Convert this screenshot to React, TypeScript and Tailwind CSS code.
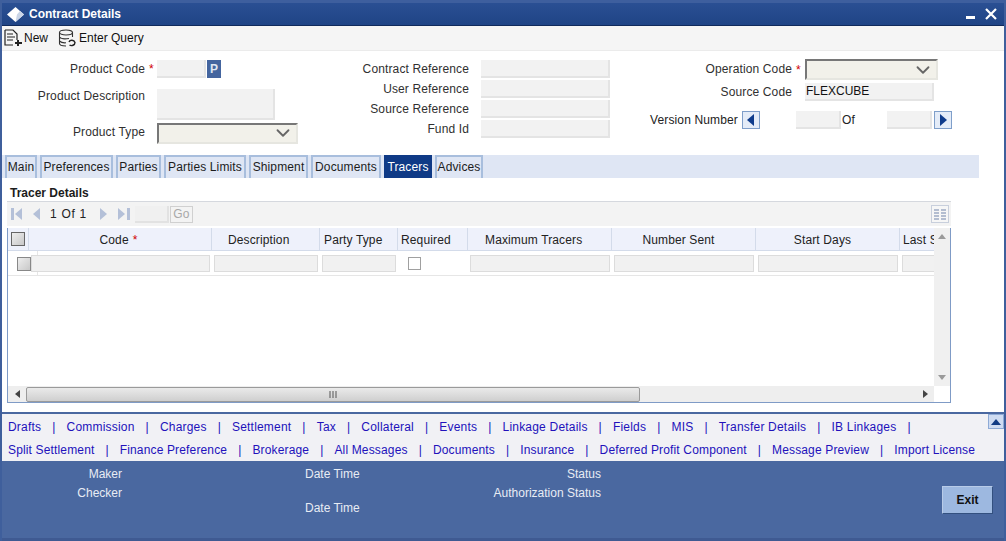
import { ChevronDown } from "lucide-react";
import type { ReactNode } from "react";

const inputCls = "bg-[#f2f2f2] border-b-2 border-r-2 border-[#e4e4e4]";

function Star() {
  return <span className="text-[#d00000]">*</span>;
}

function Input({ className, children }: { className: string; children?: ReactNode }) {
  return <div className={`${inputCls} ${className}`}>{children}</div>;
}

function Select({ className }: { className: string }) {
  return (
    <div className={`flex items-center justify-end pr-[2px] bg-[#f2f1ea] border-t-2 border-l-2 border-t-[#777777] border-l-[#777777] border-b-2 border-r-2 border-b-[#e6e6e0] border-r-[#e6e6e0] ${className}`}>
      <ChevronDown size={22} strokeWidth={2} className="text-[#666666]" />
    </div>
  );
}

function FormRow({ label, labelWidth, star, children, className }: { label: string; labelWidth: string; star?: boolean; children: ReactNode; className: string }) {
  return (
    <div className={`flex items-center ${className}`}>
      <span className={`text-right text-[#303030] ${labelWidth}`}>{label}</span>
      <span className="w-[12px] pl-[4px] leading-none">{star ? <Star /> : null}</span>
      {children}
    </div>
  );
}

function Arrow({ left }: { left?: boolean }) {
  return (
    <div className="flex h-[18px] w-[18px] items-center justify-center bg-[#e4ecf8] border border-[#7f9fca]">
      <svg width="8" height="12" viewBox="0 0 8 12">
        <path d={left ? "M7 0V12L0 6Z" : "M1 0V12L8 6Z"} fill="#0f3c8c" />
      </svg>
    </div>
  );
}

function Tab({ label, width, active }: { label: string; width: string; active?: boolean }) {
  return (
    <div className={`flex h-[23px] items-center justify-center pb-[2px] border-2 border-b-0 ${width} ${active ? "bg-[#0f3a86] border-[#0f3a86] text-white" : "bg-[#dfe6f4] border-[#a8bedd] text-[#1c1c1c]"}`}>
      {label}
    </div>
  );
}

type Column = { label: string; w: string; cell: string; input?: string; star?: boolean; check?: boolean };

const columns: Column[] = [
  { label: "Code", w: "w-[183px]", cell: "justify-center pr-[3px]", input: "w-[179px] ml-[2px]", star: true },
  { label: "Description", w: "w-[108px]", cell: "pl-[16px]", input: "w-[104px] ml-[2px]" },
  { label: "Party Type", w: "w-[78px]", cell: "pl-[4px]", input: "w-[74px] ml-[2px]" },
  { label: "Required", w: "w-[70px]", cell: "pl-[3px]", check: true },
  { label: "Maximum Tracers", w: "w-[144px]", cell: "pl-[17px]", input: "w-[140px] ml-[2px]" },
  { label: "Number Sent", w: "w-[144px]", cell: "justify-center pr-[10px]", input: "w-[140px] ml-[2px]" },
  { label: "Start Days", w: "w-[144px]", cell: "justify-center pr-[10px]", input: "w-[140px] ml-[2px]" },
  { label: "Last Sent", w: "w-[100px]", cell: "pl-[3px]", input: "w-[96px] ml-[2px]" },
];

const linksA = ["Drafts", "Commission", "Charges", "Settlement", "Tax", "Collateral", "Events", "Linkage Details", "Fields", "MIS", "Transfer Details", "IB Linkages"];
const linksB = ["Split Settlement", "Finance Preference", "Brokerage", "All Messages", "Documents", "Insurance", "Deferred Profit Component", "Message Preview", "Import License"];

function Links({ items, trailing, className }: { items: string[]; trailing?: boolean; className: string }) {
  return (
    <div className={`flex items-center gap-[11px] pl-[6px] text-[#2211bb] ${className}`}>
      {items.map((item, i) => (
        <div key={item} className="flex items-center gap-[11px]">
          <span>{item}</span>
          {i < items.length - 1 || trailing ? <span>|</span> : null}
        </div>
      ))}
    </div>
  );
}

export default function App() {
  return (
    <div className="flex h-[541px] w-[1006px] flex-col overflow-hidden border-x-2 border-[#3f5f9c] bg-white text-[12px] leading-[14px] tracking-[0.13px] font-['Liberation_Sans',Arial,sans-serif]">
      {/* title bar */}
      <div className="-mx-[2px] flex h-[26px] shrink-0 items-center bg-gradient-to-b from-[#2a4f93] to-[#1f4486] border-t-[3px] border-[#3e5f9e] border-b border-b-[#102a5c] pl-[7px] pr-[9px] tracking-normal text-white">
        <svg width="17" height="15" viewBox="0 0 17 15" className="mr-[5px]">
          <path d="M8.5 0L17 7.5L8.5 15L0 7.5Z" fill="#ffffff" />
          <path d="M8.5 15L17 7.5L13 4L10 7.5Z" fill="#c9d4e6" />
        </svg>
        <span className="font-bold">Contract Details</span>
        <div className="ml-auto flex items-center gap-[9px]">
          <svg width="11" height="11" viewBox="0 0 11 11"><rect x="1" y="7" width="9" height="3" fill="#ffffff" /></svg>
          <svg width="12" height="12" viewBox="0 0 12 12"><path d="M1 1L11 11M11 1L1 11" stroke="#ffffff" strokeWidth="2.2" /></svg>
        </div>
      </div>

      {/* toolbar */}
      <div className="flex h-[25px] shrink-0 items-center bg-[#f5f5f5] border-b border-[#ebebeb] pl-[2px] tracking-normal text-[#111111]">
        <svg width="19" height="18" viewBox="0 0 19 18" fill="none" stroke="#222222" strokeWidth="1.2" className="mr-[1px]">
          <path d="M1 1H9L13 5V11M1 1V16H9M3 5H9M3 8H11M3 11H9" />
          <path d="M14 11V17M11 14H18" strokeWidth="2" />
        </svg>
        <span>New</span>
        <svg width="19" height="18" viewBox="0 0 19 18" fill="none" stroke="#333333" strokeWidth="1.1" className="ml-[10px] mr-[2px]">
          <ellipse cx="8" cy="3.5" rx="6.5" ry="2.5" />
          <path d="M1.5 3.5V14.5C1.5 16 4 17 8 17M14.5 3.5V8M1.5 8C3 10 8 10 11 9.5M1.5 12C3 13.5 6 14 8 13.8" />
          <path d="M11 13C12 10.5 16 10.5 17 13.5C17 16 13.5 17.5 11.5 16" stroke="#222222" strokeWidth="1.4" />
        </svg>
        <span>Enter Query</span>
      </div>

      {/* form */}
      <div className="flex h-[104px] shrink-0 text-[12px]">
        <div className="w-[338px] shrink-0 pt-[9px]">
          <FormRow label="Product Code" labelWidth="w-[143px]" star className="h-[18px]">
            <Input className="h-[18px] w-[49px]" />
            <div className="ml-[1px] flex h-[18px] w-[14px] items-center justify-center bg-[#44659f] font-bold text-[#dfe5f0]">P</div>
          </FormRow>
          <FormRow label="Product Description" labelWidth="w-[143px]" className="mt-[11px] h-[31px] !items-start">
            <Input className="h-[31px] w-[118px]" />
          </FormRow>
          <FormRow label="Product Type" labelWidth="w-[143px] pb-[2px]" className="mt-[2px] h-[22px]">
            <Select className="h-[21px] w-[141px]" />
          </FormRow>
        </div>
        <div className="w-[272px] shrink-0 pt-[9px]">
          {["Contract Reference", "User Reference", "Source Reference", "Fund Id"].map((label) => (
            <FormRow key={label} label={label} labelWidth="w-[129px]" className="mb-[2px] h-[18px]">
              <Input className="h-[18px] w-[129px]" />
            </FormRow>
          ))}
        </div>
        <div className="flex-1 pt-[8px]">
          <FormRow label="Operation Code" labelWidth="w-[180px] pb-[2px]" star className="h-[21px]">
            <Select className="ml-[1px] h-[21px] w-[133px]" />
          </FormRow>
          <FormRow label="Source Code" labelWidth="w-[180px]" className="mt-[3px] h-[18px]">
            <Input className="ml-[1px] flex h-[18px] w-[129px] items-center pl-[1px] tracking-normal text-[#111111]">FLEXCUBE</Input>
          </FormRow>
          <div className="mt-[10px] ml-[38px] flex h-[18px] items-center text-[#222222]">
            <span className="w-[90px]">Version Number</span>
            <div className="ml-[2px]"><Arrow left /></div>
            <Input className="ml-[36px] h-[18px] w-[45px]" />
            <span className="ml-[1px] w-[45px]">Of</span>
            <Input className="h-[18px] w-[45px]" />
            <div className="ml-[2px]"><Arrow /></div>
          </div>
        </div>
      </div>

      {/* tabs */}
      <div className="flex h-[23px] w-[977px] shrink-0 gap-[3px] bg-[#dfe6f4] pl-[3px]">
        <Tab label="Main" width="w-[32px]" />
        <Tab label="Preferences" width="w-[73px]" />
        <Tab label="Parties" width="w-[45px]" />
        <Tab label="Parties Limits" width="w-[82px]" />
        <Tab label="Shipment" width="w-[59px]" />
        <Tab label="Documents" width="w-[70px]" />
        <Tab label="Tracers" width="w-[48px]" active />
        <Tab label="Advices" width="w-[48px]" />
      </div>

      {/* tracer details */}
      <div className="flex h-[23px] shrink-0 items-center pl-[8px] pt-[6px] font-bold tracking-normal text-[#1c1c1c]">Tracer Details</div>

      <div className="ml-[5px] flex h-[25px] w-[944px] shrink-0 items-center bg-[#f3f3f3] border-t border-t-[#d5d8de] text-[#222222]">
        <svg width="40" height="14" viewBox="0 0 40 14" className="ml-[3px]" fill="#b4c0d8">
          <rect x="1" y="1" width="3" height="12" />
          <path d="M12 1V13L5 7Z" />
          <path d="M30 1V13L23 7Z" />
        </svg>
        <span className="w-[50px] tracking-[0.7px]">1 Of 1</span>
        <svg width="31" height="14" viewBox="0 0 31 14" fill="#b4c0d8">
          <path d="M0 1V13L7 7Z" />
          <path d="M18 1V13L25 7Z" />
          <rect x="27" y="1" width="3" height="12" />
        </svg>
        <div className="ml-[4px] h-[17px] w-[34px] bg-[#f0f0f0] border-b-2 border-r-2 border-[#e2e2e2]" />
        <div className="ml-[1px] flex h-[17px] w-[23px] items-center justify-center border border-[#d0d0d0] text-[#a8a8a8]">Go</div>
        <svg width="18" height="18" viewBox="0 0 18 18" className="ml-auto mr-[2px]" fill="none">
          <rect x="0.5" y="0.5" width="17" height="17" fill="#f6f6f6" stroke="#c8cfdc" />
          <path d="M3 5H8M10 5H15M3 8H8M10 8H15M3 11H8M10 11H15M3 14H8M10 14H15" stroke="#9dabc4" strokeWidth="1.5" />
        </svg>
      </div>

      {/* table */}
      <div className="mt-[2px] ml-[5px] flex h-[175px] w-[944px] shrink-0 flex-col border-x border-b border-[#7f9bc6]">
        <div className="flex h-[158px] min-h-0">
          <div className="w-[926px] overflow-hidden">
            <div className="flex h-[23px] w-[1100px] bg-[#eef1fb] border-b border-[#d3dbea]">
              <div className="flex w-[21px] items-center justify-center border-r border-[#d3dbea]">
                <div className="h-[14px] w-[14px] border border-[#666666] bg-gradient-to-br from-[#eeeeee] to-[#c8c8c8]" />
              </div>
              {columns.map((col) => (
                <div key={col.label} className={`flex items-center pt-[1px] border-r border-[#d3dbea] text-[#222222] ${col.w} ${col.cell}`}>
                  <span>{col.label}</span>
                  {col.star ? <span className="ml-[4px] leading-none"><Star /></span> : null}
                </div>
              ))}
            </div>
            <div className="flex h-[25px] w-[1100px] border-b border-[#e6e6e6]">
              <div className="-mr-[9px] flex w-[30px] shrink-0 items-center border-r border-[#e6e6e6]">
                <div className="ml-[9px] mt-[2px] h-[14px] w-[14px] shrink-0 border border-[#888888] bg-gradient-to-br from-[#eeeeee] to-[#c8c8c8]" />
              </div>
              {columns.map((col) => (
                <div key={col.label} className={`relative flex items-center ${col.w}`}>
                  {col.check ? (
                    <div className="ml-[10px] h-[13px] w-[13px] border border-[#a0a0a0] bg-white" />
                  ) : (
                    <div className={`h-[17px] bg-[#f1f1f1] border border-[#dcdcdc] ${col.input}`} />
                  )}
                </div>
              ))}
            </div>
          </div>
          <div className="flex w-[16px] flex-col items-center justify-between bg-[#f0f0f0] py-[6px]">
            <svg width="8" height="5" viewBox="0 0 8 5"><path d="M0 5L4 0L8 5Z" fill="#9a9a9a" /></svg>
            <svg width="8" height="5" viewBox="0 0 8 5"><path d="M0 0L4 5L8 0Z" fill="#9a9a9a" /></svg>
          </div>
        </div>
        <div className="flex h-[16px] items-center">
          <div className="flex h-[16px] w-[926px] items-center bg-[#eeeeee]">
            <svg width="5" height="8" viewBox="0 0 5 8" className="ml-[7px]"><path d="M5 0L0 4L5 8Z" fill="#444444" /></svg>
            <div className="ml-[6px] flex h-[15px] w-[614px] items-center justify-center rounded-[2px] border border-[#9a9a9a] bg-gradient-to-b from-[#eaeaea] to-[#cfcfcf]">
              <svg width="8" height="7" viewBox="0 0 8 7"><path d="M1 0V7M4 0V7M7 0V7" stroke="#555555" /></svg>
            </div>
            <svg width="5" height="8" viewBox="0 0 5 8" className="ml-auto mr-[6px]"><path d="M0 0L5 4L0 8Z" fill="#444444" /></svg>
          </div>
        </div>
      </div>

      {/* sub screen links */}
      <div className="relative mt-[9px] h-[49px] shrink-0 bg-[#f1f1f5] border-t-2 border-[#4a68a0] pt-[2px]">
        <Links items={linksA} trailing className="h-[22px] tracking-[0.2px]" />
        <Links items={linksB} className="h-[23px] tracking-[0.15px]" />
        <div className="absolute right-0 top-0 flex h-[15px] w-[16px] items-center justify-center bg-[#cfdcf2] border border-[#8eaad6]">
          <svg width="10" height="6" viewBox="0 0 10 6"><path d="M0 6L5 0L10 6Z" fill="#123c85" /></svg>
        </div>
      </div>

      {/* footer */}
      <div className="-mx-[2px] flex flex-1 bg-[#4a68a0] border-b-[3px] border-[#3f5a92] tracking-normal text-[#e8ecf4]">
        <div className="w-[122px] shrink-0 pt-[6px] text-right">
          <div>Maker</div>
          <div className="mt-[5px]">Checker</div>
        </div>
        <div className="ml-[183px] w-[100px] shrink-0 pt-[6px]">
          <div>Date Time</div>
          <div className="mt-[20px]">Date Time</div>
        </div>
        <div className="w-[196px] shrink-0 pt-[6px] text-right">
          <div>Status</div>
          <div className="mt-[5px]">Authorization Status</div>
        </div>
        <div className="ml-auto mr-[13px] mt-[25px] flex h-[28px] w-[51px] items-center justify-center bg-[#9db8e0] border border-[#33507f] border-l-[#b8cbe8] border-t-[#b8cbe8] font-bold text-[#111111]">Exit</div>
      </div>
    </div>
  );
}
